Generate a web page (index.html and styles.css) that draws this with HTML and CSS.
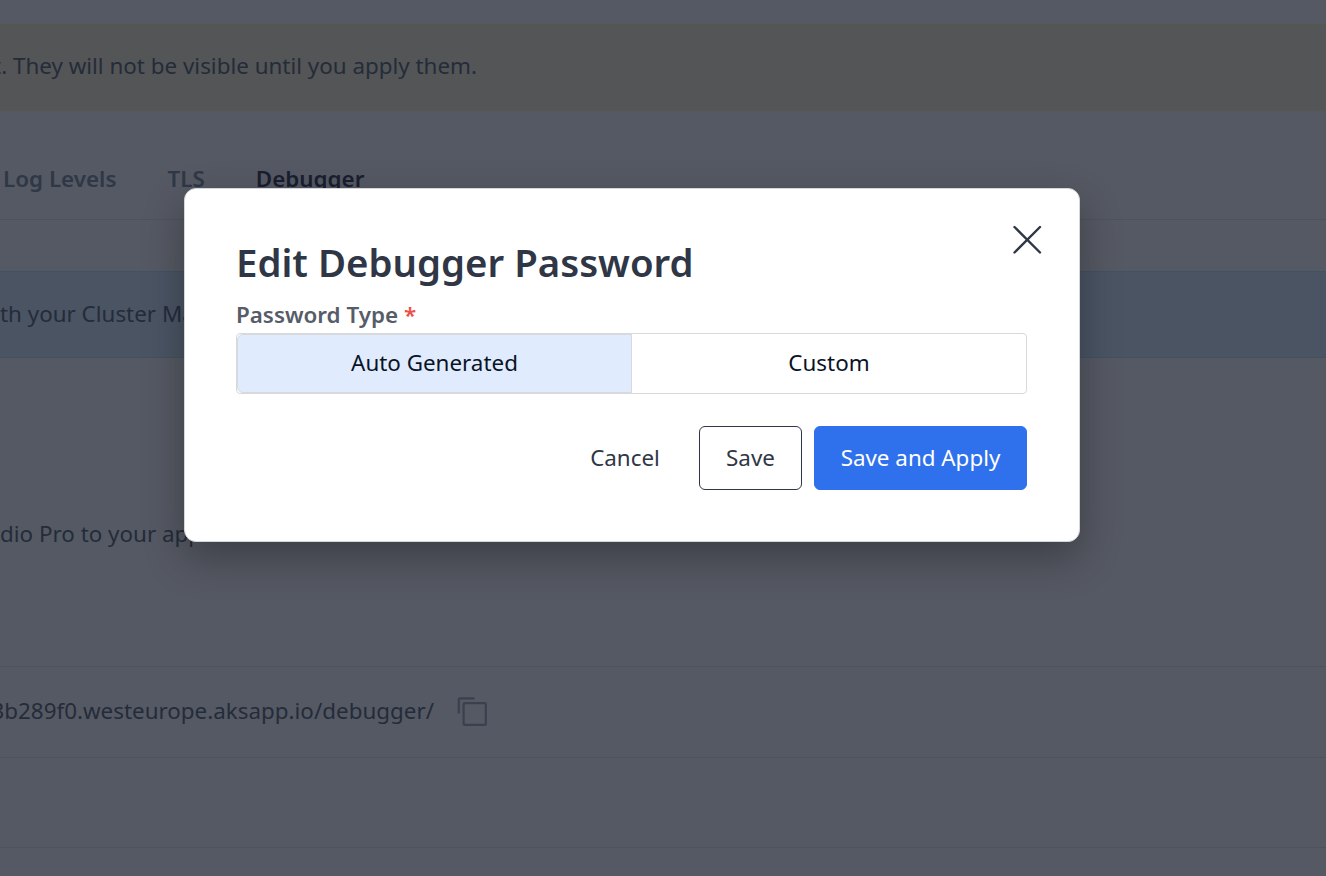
FILE: index.html
```html
<!DOCTYPE html>
<html lang="en">
<head>
<meta charset="utf-8">
<title>Edit Debugger Password</title>
<link rel="stylesheet" href="styles.css">
</head>
<body>
<main class="page">
  <section class="banner banner-warning"><p class="banner-text">t. They will not be visible until you apply them.</p></section>
  <nav class="tabs">
    <a class="tab">Log Levels</a>
    <a class="tab">TLS</a>
    <a class="tab tab-active">Debugger</a>
  </nav>
  <section class="banner banner-info"><p class="info-text">th your Cluster Ma</p></section>
  <section class="description"><p class="description-text">dio Pro to your app</p></section>
  <section class="row">
    <p class="url">3b289f0.westeurope.aksapp.io/debugger/</p>
    <svg class="copy" width="32" height="32" viewBox="0 0 32 32" fill="none" stroke="#3b4051" stroke-width="2.200">
      <path d="M2.800 17.500V3.600Q2.800 2.300 4 2.300H18.500"/>
      <rect x="7.600" y="7.100" width="22.200" height="21.800" rx="1"/>
    </svg>
  </section>
  <section class="row"></section>
</main>
<div class="overlay">
  <div class="dialog" role="dialog" aria-labelledby="title">
    <button class="close" aria-label="Close">
      <svg width="30" height="30" viewBox="0 0 30 30" fill="none" stroke="#2f3646" stroke-width="2.400" stroke-linecap="round"><path d="M2.500 2 28 27.500M28 2 2.500 27.500"/></svg>
    </button>
    <h1 class="title" id="title">Edit Debugger Password</h1>
    <div class="label">Password Type <span class="required">*</span></div>
    <div class="segmented">
      <button class="segment segment-selected">Auto Generated</button>
      <button class="segment">Custom</button>
    </div>
    <div class="actions">
      <button class="button button-link">Cancel</button>
      <button class="button button-outline">Save</button>
      <button class="button button-primary">Save and Apply</button>
    </div>
  </div>
</div>
</body>
</html>
```
FILE: styles.css
```css
* { box-sizing: border-box; }
body {
  margin: 0;
  height: 876px;
  overflow: hidden;
  background: #555963;
  color: #242c3a;
  font-family: "Noto Sans", sans-serif;
  font-size: 22.4px;
  line-height: 32px;
}
p, h1 { margin: 0; white-space: nowrap; }
button { font: inherit; margin: 0; cursor: pointer; white-space: nowrap; }
svg { display: block; }
.page { padding-top: 24px; height: 876px; overflow: hidden; }
.banner { display: flex; align-items: center; height: 87px; border: solid; border-width: 1px 0; }
.banner-warning { background: #545556; border-color: #56584f; padding-bottom: 3px; }
.banner-text { width: 477px; display: flex; justify-content: flex-end; }
.tabs {
  display: flex;
  gap: 51px;
  height: 109px;
  padding: 52px 0 0 3px;
  border-bottom: 1px solid #4d525c;
  color: #2f3846;
  font-weight: 600;
}
.tab-active { color: #191f2f; }
.banner-info { margin-top: 51px; background: #4a5463; border-color: #445162; padding-bottom: 1px; }
.description { height: 309px; padding-top: 160px; border-bottom: 1px solid #4d525c; }
.row { display: flex; align-items: center; gap: 22px; height: 91px; border-bottom: 1px solid #4d525c; }
.row + .row { height: 90px; }
.url { width: 434px; display: flex; justify-content: flex-end; padding-bottom: 2px; }
.overlay { position: absolute; inset: 0; display: flex; justify-content: center; align-items: flex-start; padding: 188px 62px 0 0; }
.dialog {
  position: relative;
  width: 896px;
  height: 354px;
  padding: 48px 52px 0 51px;
  background: #fff;
  border: 1px solid #d3d7da;
  border-radius: 12px;
  box-shadow: 0 16px 40px rgba(0, 0, 0, .3);
}
.close { position: absolute; top: 36px; right: 37px; padding: 0; border: 0; background: none; }
.title { color: #2f3646; font-size: 38.4px; font-weight: 600; line-height: 50px; }
.label { margin-top: 12px; color: #565c68; font-weight: 600; }
.required { color: #eb5149; }
.segmented { display: flex; height: 61px; margin-top: 2px; border: 1px solid #d7d9dc; border-radius: 4px; }
.segment { flex: 1; padding: 0 0 1px; border: 0; background: none; color: #0a1326; }
.segment-selected { flex: 0 0 395px; background: #e0ecfd; border: 1px solid #d7d9dc; border-radius: 6px 0 0 6px; }
.actions { display: flex; justify-content: flex-end; gap: 12px; margin-top: 32px; }
.button { height: 64px; padding: 0; border: 1px solid transparent; border-radius: 6px; background: none; color: #2f3646; }
.button-link { width: 124px; }
.button-outline { width: 103px; border-color: #2f3646; }
.button-primary { width: 213px; background: #2f70ed; border-color: #2f70ed; color: #fff; }
```
